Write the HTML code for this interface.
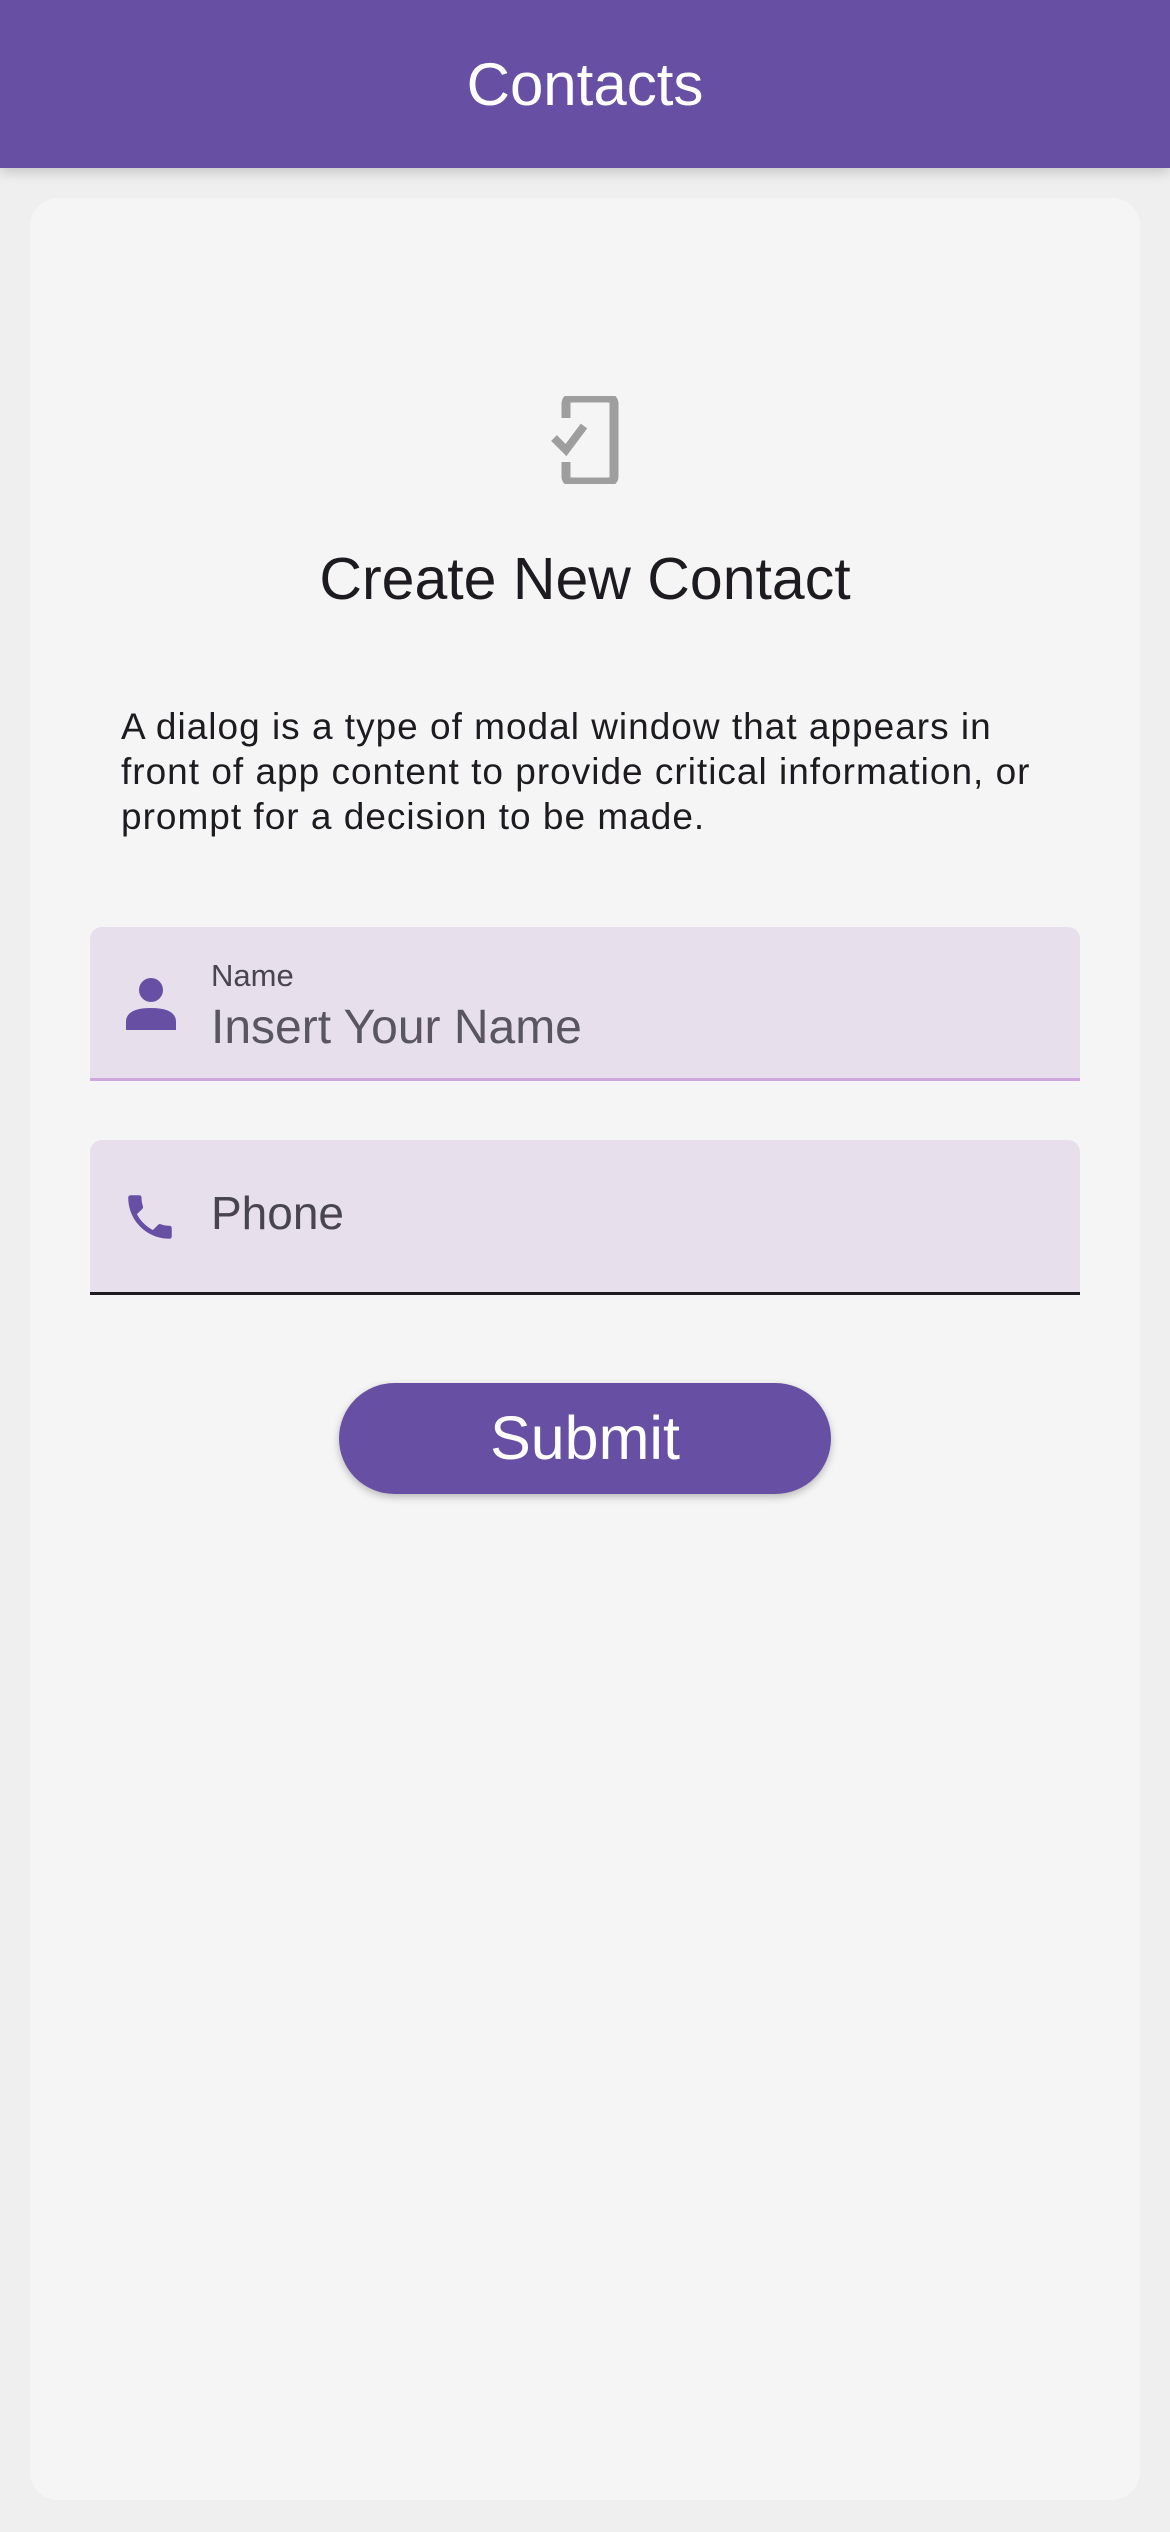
<!DOCTYPE html>
<html><head><meta charset="utf-8"><style>
*{margin:0;padding:0;box-sizing:border-box}
body{width:1170px;height:2532px;background:#efefef;font-family:"Liberation Sans",sans-serif;position:relative;overflow:hidden}
.hdr{position:absolute;left:0;top:0;width:1170px;height:168px;background:#6750a4;box-shadow:0 4px 12px rgba(0,0,0,.18)}
.hdr span{position:absolute;left:0;right:0;top:52px;text-align:center;color:#fff;font-size:60px;line-height:66px}
.card{position:absolute;left:30px;top:198px;width:1110px;height:2302px;background:#f5f5f5;border-radius:28px}
.t{position:absolute;left:0;width:1170px;text-align:center;color:#1d1b20;font-size:59px;top:546px;line-height:66px}
.p{position:absolute;left:121px;top:704px;font-size:37px;line-height:45px;color:#1d1b20;white-space:nowrap;letter-spacing:1px}
.f{position:absolute;left:90px;width:990px;background:#e7dfec;border-radius:12px 12px 0 0}
.lbl{position:absolute;left:211px;color:#49454f}
.btn{position:absolute;left:339px;top:1383px;width:492px;height:111px;border-radius:56px;background:#6750a4;box-shadow:0 3px 8px rgba(0,0,0,.25);color:#fff;font-size:61px;text-align:center;line-height:111px}
</style></head><body>
<div class="hdr"><span>Contacts</span></div>
<div class="card"></div>
<svg style="position:absolute;left:550px;top:396px" width="72" height="88" viewBox="0 0 72 88">
<path d="M16 22 V8 Q16 2 22 2 H58 Q64 2 64 8 V80 Q64 86 58 86 H22 Q16 86 16 80 V66" fill="none" stroke="#9e9e9e" stroke-width="9"/>
<path d="M4 42 L16 54 L34 30" fill="none" stroke="#9e9e9e" stroke-width="8"/>
</svg>
<div class="t">Create New Contact</div>
<div class="p">A dialog is a type of modal window that appears in<br>front of app content to provide critical information, or<br>prompt for a decision to be made.</div>
<div class="f" style="top:927px;height:154px;border-bottom:3px solid #d0a6e0"></div>
<svg style="position:absolute;left:124px;top:978px" width="54" height="52" viewBox="0 0 54 52">
<circle cx="27" cy="12" r="12" fill="#6750a4"/>
<path d="M2 52 V44 Q2 30 27 30 Q52 30 52 44 V52 Z" fill="#6750a4"/>
</svg>
<div class="lbl" style="top:958px;font-size:31px">Name</div>
<div class="lbl" style="top:1000px;font-size:48px;color:#5a5660">Insert Your Name</div>
<div class="f" style="top:1140px;height:155px;border-bottom:3px solid #1d1b20"></div>
<svg style="position:absolute;left:120px;top:1188px" width="60" height="58" viewBox="0 0 24 24">
<path d="M6.6 10.8c1.4 2.8 3.8 5.1 6.6 6.6l2.2-2.2c.3-.3.7-.4 1-.2 1.1.4 2.300.6 3.6.6.6 0 1 .4 1 1V20c0 .6-.4 1-1 1C10.6 21 3 13.4 3 4c0-.6.4-1 1-1h3.5c.6 0 1 .4 1 1 0 1.3.2 2.5.6 3.6.1.3 0 .7-.2 1L6.6 10.8z" fill="#6750a4"/>
</svg>
<div class="lbl" style="top:1186px;font-size:46px">Phone</div>
<div class="btn">Submit</div>
</body></html>
